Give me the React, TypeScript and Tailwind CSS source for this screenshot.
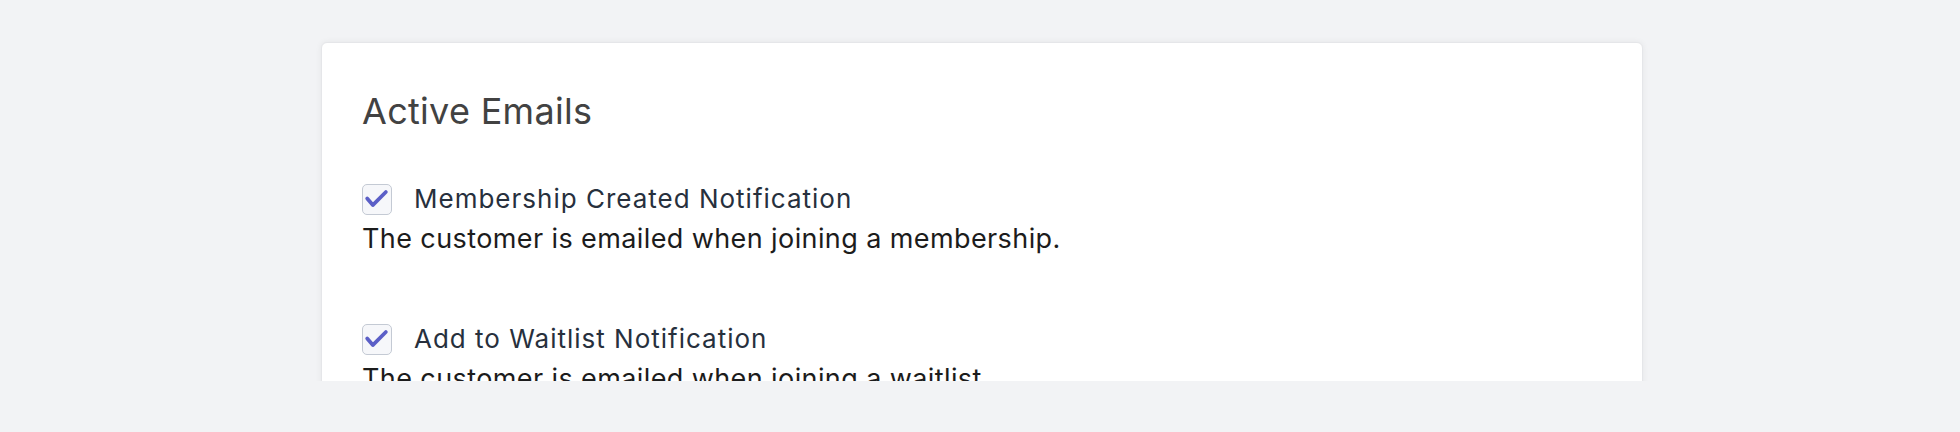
export default function App() {
  const items = [
    { label: "Membership Created Notification", text: "The customer is emailed when joining a membership." },
    { label: "Add to Waitlist Notification", text: "The customer is emailed when joining a waitlist." },
    { label: "Waitlist Spot Available Notification", text: "The customer is emailed when a spot opens up." },
  ];

  return (
    <div className="h-[432px] bg-[#f2f3f5] font-['Inter',sans-serif]">
      <div className="h-[381px] overflow-hidden pt-[42px] pl-[321px]">
        <div className="w-[1322px] rounded-md border border-[#e5e6e9] bg-white px-10 pt-[46px] pb-10 shadow-[0_0_6px_rgba(0,0,0,0.06)]">
          <h2 className="text-[36px] leading-[44px] font-normal tracking-[0.3px] text-[#424242]">Active Emails</h2>
          <div className="mt-[50px] flex flex-col gap-16">
            {items.map((item) => (
              <div key={item.label}>
                <label className="flex h-[32px] items-center gap-[22px]">
                  <span className="flex h-[31px] w-[30px] items-center justify-center rounded-[5px] border border-[#c4cad4] bg-[#f6f7fa]">
                    <svg viewBox="0 0 30 30" className="h-[30px] w-[30px]">
                      <polyline
                        points="4.5,14.5 10.5,21.5 24.5,7.5"
                        fill="none"
                        stroke="#5b5fc7"
                        strokeWidth="4"
                        strokeLinecap="round"
                        strokeLinejoin="round"
                      />
                    </svg>
                  </span>
                  <span className="text-[26px] leading-[32px] tracking-[1px] text-[#27303d]">{item.label}</span>
                </label>
                <p className="mt-1 text-[27px] leading-[40px] tracking-[0.4px] text-[#1c1c1c]">{item.text}</p>
              </div>
            ))}
          </div>
        </div>
      </div>
    </div>
  );
}
